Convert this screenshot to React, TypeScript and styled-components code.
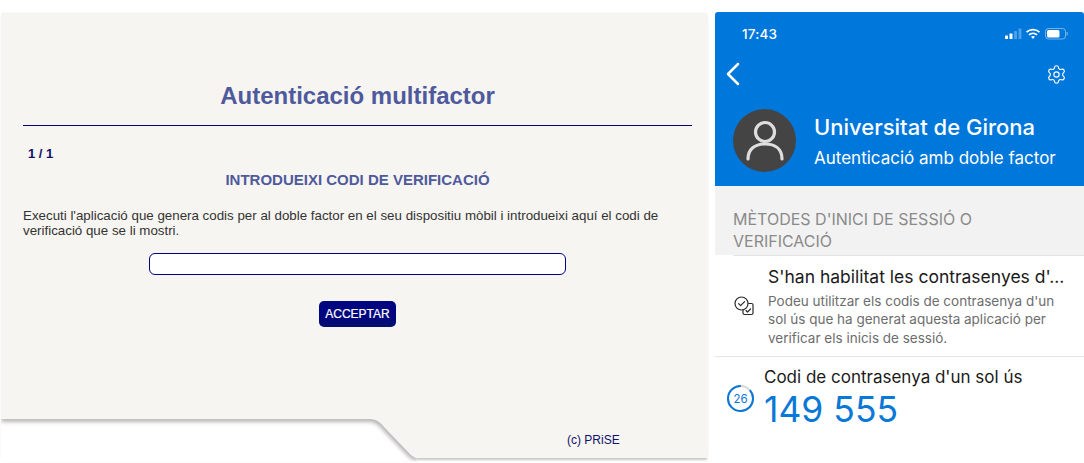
import styled, { createGlobalStyle } from "styled-components";
import { ChevronLeft, Settings } from "lucide-react";

const GlobalStyle = createGlobalStyle`
  html, body {
    margin: 0;
    padding: 0;
    background: #ffffff;
  }
  body {
    width: 1084px;
    height: 463px;
    overflow: hidden;
    font-family: "Liberation Sans", Arial, sans-serif;
  }
`;

const Page = styled.div`
  display: flex;
  align-items: flex-start;
  width: 1084px;
  height: 463px;
  padding-left: 1px;
  box-sizing: border-box;
`;

const Panel = styled.section`
  position: relative;
  width: 707px;
  height: 444px;
  margin-top: 14px;
  padding: 68px 16px 0 22px;
  box-sizing: border-box;
  background: #f6f5f1;
  box-shadow: 0 -2px 2px -1px rgba(0, 0, 0, 0.07), 0 3px 2px -1px rgba(0, 0, 0, 0.22);
`;

const Title = styled.h1`
  margin: 0;
  font-size: 24px;
  line-height: 28px;
  font-weight: 700;
  text-align: center;
  color: #4f5a9c;
`;

const Rule = styled.hr`
  margin: 15px 0 0;
  border: 0;
  border-top: 1px solid #000070;
`;

const Step = styled.div`
  margin: 21px 0 0 5px;
  font-size: 13px;
  line-height: 14px;
  font-weight: 700;
  color: #10106a;
`;

const Subtitle = styled.h2`
  margin: 11px 0 0;
  font-size: 15px;
  line-height: 16px;
  font-weight: 700;
  text-align: center;
  color: #4f5a9c;
`;

const Intro = styled.p`
  max-width: 645px;
  margin: 20px 0 0;
  font-size: 13.33px;
  line-height: 15px;
  color: #333333;
`;

const CodeInput = styled.input`
  display: block;
  width: 417px;
  height: 22px;
  margin: 15px auto 0;
  padding: 0 6px;
  box-sizing: border-box;
  background: #ffffff;
  border: 1px solid #000080;
  border-radius: 6px;
  outline: none;
`;

const Accept = styled.button`
  display: block;
  width: 77px;
  height: 26px;
  margin: 26px auto 0;
  padding: 0;
  border: 0;
  border-radius: 5px;
  background: linear-gradient(#00067f 60%, #04106e);
  color: #ffffff;
  font-family: inherit;
  font-size: 12px;
  -webkit-text-stroke: 0.2px #ffffff;
`;

const Credit = styled.div`
  position: absolute;
  left: 566px;
  top: 419px;
  font-size: 12px;
  line-height: 14px;
  color: #10106a;
`;

const Notch = styled.svg`
  position: absolute;
  left: 0;
  bottom: -3px;
  display: block;
`;

const Phone = styled.section`
  width: 369px;
  margin: 12px 0 0 7px;
  font-family: Inter, "Noto Sans", sans-serif;
`;

const BlueHeader = styled.header`
  height: 174px;
  padding: 0 20px 0 18px;
  box-sizing: border-box;
  background: #0077db;
  border-radius: 3px 3px 0 0;
  color: #ffffff;
`;

const StatusBar = styled.div`
  display: flex;
  align-items: center;
  justify-content: space-between;
  height: 44px;
  padding: 0 0 0 9px;
  margin-right: -5px;
`;

const Clock = styled.span`
  font-size: 13.5px;
  font-weight: 500;
  letter-spacing: 0.2px;
`;

const StatusIcons = styled.svg`
  display: block;
`;

const NavRow = styled.div`
  display: flex;
  align-items: center;
  justify-content: space-between;
  height: 32px;
  margin: 2px -3px 0 -20px;
`;

const Profile = styled.div`
  display: flex;
  align-items: flex-start;
  gap: 18px;
  margin-top: 19px;
`;

const Avatar = styled.div`
  display: flex;
  align-items: center;
  justify-content: center;
  width: 63px;
  height: 63px;
  flex: none;
  border-radius: 50%;
  background: #444444;
`;

const ProfileText = styled.div`
  padding-top: 3px;
`;

const ProfileName = styled.div`
  font-size: 22px;
  line-height: 30px;
  font-weight: 500;
`;

const ProfileSub = styled.div`
  margin-top: 1px;
  font-size: 17px;
  line-height: 30px;
`;

const SectionHead = styled.div`
  height: 69px;
  padding: 23px 18px 0;
  box-sizing: border-box;
  background: #f2f2f2;
  color: #8a8a8a;
  font-size: 16px;
  line-height: 21.5px;
`;

const SectionRule = styled.div`
  height: 1px;
  margin-left: 18px;
  background: #e4e4e4;
`;

const Row = styled.div<{ $divider?: boolean }>`
  display: flex;
  align-items: center;
  border-bottom: ${(p) => (p.$divider ? "1px solid #e4e4e4" : "0")};
`;

const MethodRow = styled(Row)`
  height: 100px;
  padding-left: 19px;
  gap: 14px;
`;

const MethodTitle = styled.div`
  font-size: 17.5px;
  line-height: 24px;
  color: #1a1a1a;
`;

const MethodBody = styled.div`
  font-size: 13.5px;
  line-height: 18.5px;
  color: #6d6d6d;
  margin-top: 3px;
`;

const CodeRow = styled(Row)`
  align-items: flex-start;
  padding: 8px 0 0 12px;
  gap: 10px;
`;

const Timer = styled.div`
  position: relative;
  width: 27px;
  height: 27px;
  margin-top: 20px;
  flex: none;
`;

const TimerCount = styled.span`
  position: absolute;
  inset: 0;
  display: flex;
  align-items: center;
  justify-content: center;
  font-size: 11.5px;
  color: #0a78d7;
`;

const CodeLabel = styled.div`
  font-size: 17px;
  line-height: 24px;
  color: #1a1a1a;
`;

const CodeValue = styled.div`
  font-size: 35.5px;
  line-height: 42px;
  color: #0a78d7;
`;

const NOTCH_EDGE = "M0 4H369C376 4 380 8 384 13L407 37C411 41 413 43 417 43";

const App = () => (
  <>
    <GlobalStyle />
    <Page>
      <Panel>
        <Title>Autenticació multifactor</Title>
        <Rule />
        <Step>1 / 1</Step>
        <Subtitle>INTRODUEIXI CODI DE VERIFICACIÓ</Subtitle>
        <Intro>
          Executi l'aplicació que genera codis per al doble factor en el seu dispositiu mòbil i
          introdueixi aquí el codi de verificació que se li mostri.
        </Intro>
        <CodeInput />
        <Accept>ACCEPTAR</Accept>
        <Credit>(c) PRiSE</Credit>
        <Notch width="430" height="46" viewBox="0 0 430 46">
          <defs>
            <clipPath id="notch-area">
              <path d={`${NOTCH_EDGE}V46H0Z`} />
            </clipPath>
            <filter id="notch-blur" x="-5%" y="-50%" width="110%" height="200%">
              <feGaussianBlur stdDeviation="2.2" />
            </filter>
          </defs>
          <path d={`${NOTCH_EDGE}V46H0Z`} fill="#ffffff" />
          <g clipPath="url(#notch-area)">
            <path d={NOTCH_EDGE} fill="none" stroke="#a8a8a8" strokeWidth="5" filter="url(#notch-blur)" />
          </g>
        </Notch>
      </Panel>
      <Phone>
        <BlueHeader>
          <StatusBar>
            <Clock>17:43</Clock>
            <StatusIcons width="64" height="14" viewBox="0 0 64 14">
              <rect x="0" y="8.5" width="3" height="3.5" rx="0.5" fill="#ffffff" />
              <rect x="4.5" y="6.5" width="3" height="5.5" rx="0.5" fill="#ffffff" />
              <rect x="9" y="4" width="3" height="8" rx="0.5" fill="#ffffff" opacity="0.3" />
              <rect x="13.5" y="1.5" width="3" height="10.5" rx="0.5" fill="#ffffff" opacity="0.3" />
              <path d="M21.5 5.2a9.6 9.6 0 0 1 13 0M24 7.8a6 6 0 0 1 8 0" fill="none" stroke="#ffffff" strokeWidth="1.7" />
              <path d="M26 9.8a3 3 0 0 1 4 0L28 12Z" fill="#ffffff" />
              <rect x="40.5" y="1.5" width="20" height="10.5" rx="3" fill="none" stroke="#ffffff" strokeOpacity="0.45" />
              <rect x="42" y="3" width="12.5" height="7.5" rx="1.5" fill="#ffffff" />
              <rect x="61.5" y="5" width="1.2" height="3.5" rx="0.6" fill="#ffffff" opacity="0.45" />
            </StatusIcons>
          </StatusBar>
          <NavRow>
            <ChevronLeft size={40} strokeWidth={1.5} color="#ffffff" />
            <Settings size={21} strokeWidth={1.3} color="#ffffff" />
          </NavRow>
          <Profile>
            <Avatar>
              <svg width="40" height="42" viewBox="0 0 40 42" fill="none" stroke="#dedede" strokeWidth="3.2" strokeLinecap="round">
                <circle cx="20" cy="12" r="9.5" />
                <path d="M3 39c0-10 7-15 17-15s17 5 17 15" />
              </svg>
            </Avatar>
            <ProfileText>
              <ProfileName>Universitat de Girona</ProfileName>
              <ProfileSub>Autenticació amb doble factor</ProfileSub>
            </ProfileText>
          </Profile>
        </BlueHeader>
        <SectionHead>
          MÈTODES D'INICI DE SESSIÓ O
          <br />
          VERIFICACIÓ
        </SectionHead>
        <SectionRule />
        <MethodRow $divider>
          <svg width="20" height="20" viewBox="0 0 20 20" fill="none" stroke="#2a2a2a" strokeWidth="1.2" strokeLinecap="round" strokeLinejoin="round">
            <circle cx="7.5" cy="7.5" r="6.5" />
            <path d="M4.6 7.6l2 2 4-4" />
            <path d="M14.5 7.5h3a1.5 1.5 0 0 1 1.5 1.5v8a1.5 1.5 0 0 1-1.5 1.5h-7A1.5 1.5 0 0 1 9 17v-3" />
            <path d="M12 14.5l1.5 1.5 3-3" />
          </svg>
          <div>
            <MethodTitle>S'han habilitat les contrasenyes d'...</MethodTitle>
            <MethodBody>
              Podeu utilitzar els codis de contrasenya d'un
              <br />
              sol ús que ha generat aquesta aplicació per
              <br />
              verificar els inicis de sessió.
            </MethodBody>
          </div>
        </MethodRow>
        <CodeRow>
          <Timer>
            <svg width="27" height="27" viewBox="0 0 27 27" fill="none" strokeWidth="2">
              <circle cx="13.5" cy="13.5" r="12.5" stroke="#d6d6d6" />
              <circle cx="13.5" cy="13.5" r="12.5" stroke="#0a78d7" strokeDasharray="68 78.5" transform="rotate(-42 13.5 13.5)" />
            </svg>
            <TimerCount>26</TimerCount>
          </Timer>
          <div>
            <CodeLabel>Codi de contrasenya d'un sol ús</CodeLabel>
            <CodeValue>149 555</CodeValue>
          </div>
        </CodeRow>
      </Phone>
    </Page>
  </>
);

export default App;
